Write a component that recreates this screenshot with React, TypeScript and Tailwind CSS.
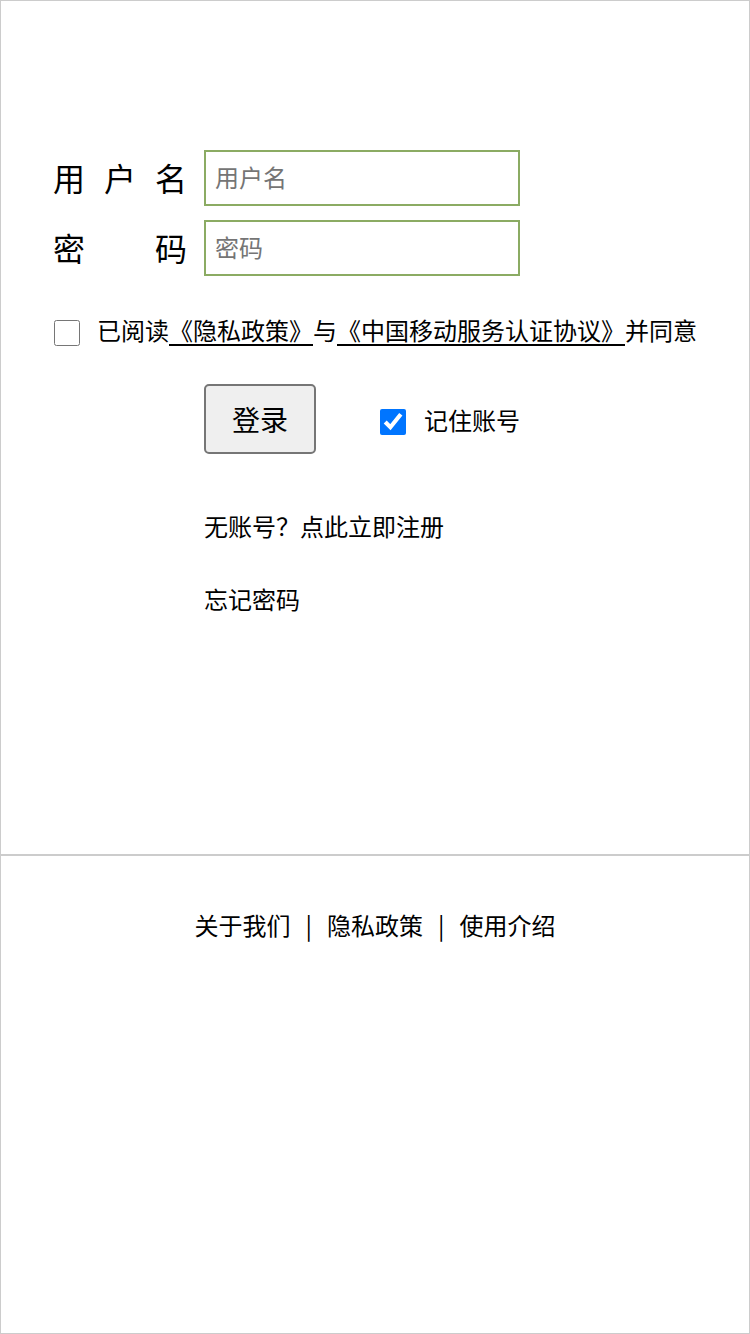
import React from "react";

export default function App() {
  const font = { fontFamily: '"Noto Sans CJK SC", "Noto Sans", sans-serif' };
  return (
    <div
      className="w-[750px] h-[1334px] border border-[#cccccc] bg-white text-black flex flex-col box-border"
      style={font}
    >
      <div className="h-[855px] border-b-2 border-[#cccccc] pt-[149px] pl-[52px] flex flex-col shrink-0">
        {/* username */}
        <div className="flex items-center h-[56px]">
          <div className="w-[134px] flex justify-between text-[32px] leading-[40px] -mt-[2px]">
            <span>用</span>
            <span>户</span>
            <span>名</span>
          </div>
          <input
            type="text"
            placeholder="用户名"
            className="ml-[17px] w-[316px] h-[56px] border-2 border-[#8bab63] px-[9px] pb-[4px] text-[24px] outline-none placeholder:text-[#757575]"
            style={font}
          />
        </div>
        {/* password */}
        <div className="flex items-center h-[56px] mt-[14px]">
          <div className="w-[134px] flex justify-between text-[32px] leading-[40px] -mt-[2px]">
            <span>密</span>
            <span>码</span>
          </div>
          <input
            type="password"
            placeholder="密码"
            className="ml-[17px] w-[316px] h-[56px] border-2 border-[#8bab63] px-[9px] pb-[4px] text-[24px] outline-none placeholder:text-[#757575]"
            style={font}
          />
        </div>
        {/* agreement */}
        <div className="flex items-center mt-[44px] h-[26px]">
          <input type="checkbox" className="w-[26px] h-[26px] m-0 ml-[1px] shrink-0" />
          <span className="ml-[17px] text-[24px] leading-[26px] whitespace-nowrap -mt-[7px]">
            已阅读<span className="underline underline-offset-[4px]">《隐私政策》</span>与
            <span className="underline underline-offset-[4px]">《中国移动服务认证协议》</span>并同意
          </span>
        </div>
        {/* login row */}
        <div className="flex items-center mt-[38px] pl-[151px]">
          <button
            className="w-[112px] h-[70px] border-2 border-[#767676] rounded-[5px] bg-[#efefef] text-[28px] leading-none flex items-center justify-center"
            style={font}
          >
            登录
          </button>
          <input
            type="checkbox"
            defaultChecked
            className="ml-[64px] w-[26px] h-[26px] m-0 mt-[6px] shrink-0"
          />
          <span className="ml-[18px] text-[24px] leading-[30px] mt-[2px]">记住账号</span>
        </div>
        <div className="pl-[151px] mt-[57px] text-[24px] leading-[30px]">无账号？点此立即注册</div>
        <div className="pl-[151px] mt-[43px] text-[24px] leading-[30px]">忘记密码</div>
      </div>
      <div className="flex justify-center items-center mt-[54px] text-[24px] leading-[30px]">
        <span>关于我们</span>
        <span className="mx-[15px]">|</span>
        <span>隐私政策</span>
        <span className="mx-[15px]">|</span>
        <span>使用介绍</span>
      </div>
    </div>
  );
}
